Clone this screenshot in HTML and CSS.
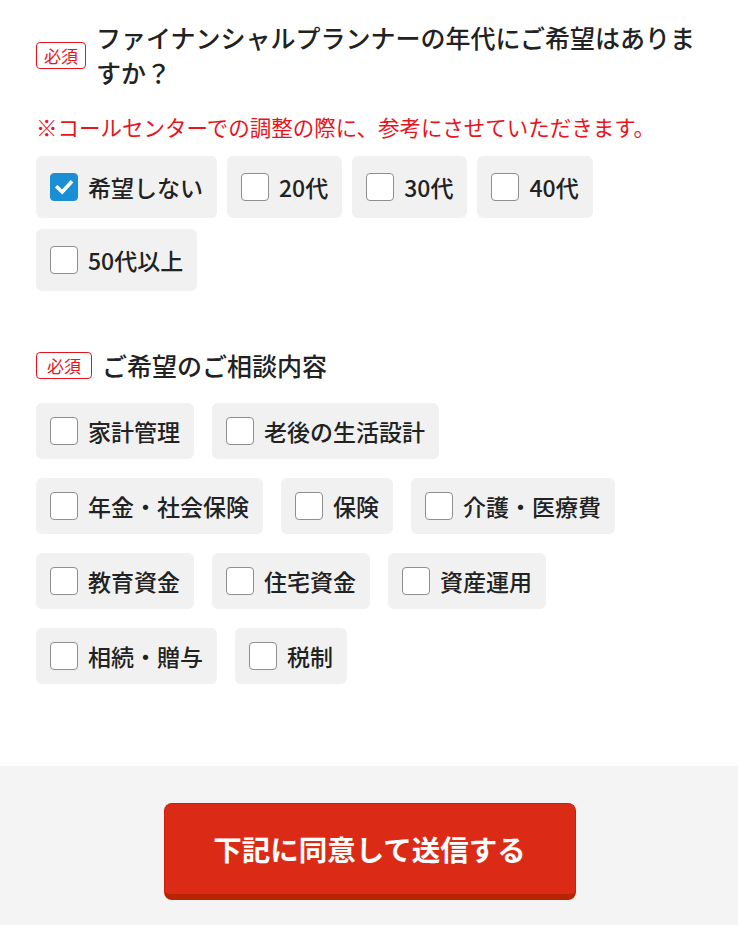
FILE: index.html
```html
<!DOCTYPE html>
<html lang="ja">
<head>
<meta charset="utf-8">
<title>ご希望のご相談内容</title>
<link rel="stylesheet" href="styles.css">
</head>
<body>
<main class="form">
  <section class="field field--age">
    <div class="field-head">
      <span class="badge badge--tight">必須</span>
      <h2 class="field-title">ファイナンシャルプランナーの年代にご希望はありますか？</h2>
    </div>
    <p class="note">※コールセンターでの調整の際に、参考にさせていただきます。</p>
    <div class="options options--wide">
      <label class="option"><span class="check is-checked"><svg viewBox="0 0 28 28" width="28" height="28"><polyline points="7.5,14.5 12.2,19 20.8,9.6" fill="none" stroke="#fff" stroke-width="3.6" stroke-linecap="square"/></svg></span><span class="option-text">希望しない</span></label>
      <label class="option"><span class="check"></span><span class="option-text">20代</span></label>
      <label class="option"><span class="check"></span><span class="option-text">30代</span></label>
      <label class="option"><span class="check"></span><span class="option-text">40代</span></label>
      <label class="option"><span class="check"></span><span class="option-text">50代以上</span></label>
    </div>
  </section>

  <section class="field field--topics">
    <div class="field-head">
      <span class="badge">必須</span>
      <h2 class="field-title field-title--single">ご希望のご相談内容</h2>
    </div>
    <div class="options options--compact">
      <label class="option"><span class="check"></span><span class="option-text">家計管理</span></label>
      <label class="option"><span class="check"></span><span class="option-text">老後の生活設計</span></label>
      <label class="option"><span class="check"></span><span class="option-text">年金・社会保険</span></label>
      <label class="option"><span class="check"></span><span class="option-text">保険</span></label>
      <label class="option"><span class="check"></span><span class="option-text">介護・医療費</span></label>
      <label class="option"><span class="check"></span><span class="option-text">教育資金</span></label>
      <label class="option"><span class="check"></span><span class="option-text">住宅資金</span></label>
      <label class="option"><span class="check"></span><span class="option-text">資産運用</span></label>
      <label class="option"><span class="check"></span><span class="option-text">相続・贈与</span></label>
      <label class="option"><span class="check"></span><span class="option-text">税制</span></label>
    </div>
  </section>
</main>
<footer class="submit-area">
  <button class="submit" type="button">下記に同意して送信する</button>
</footer>
</body>
</html>
```

FILE: styles.css
```css
html, body {
  margin: 0;
  padding: 0;
  background: #fff;
}

body {
  font-family: "Noto Sans CJK JP", "Noto Sans", sans-serif;
  color: #222;
}

.form {
  padding: 20px 36px 0;
}

.field-head {
  display: flex;
  align-items: center;
  gap: 10px;
}

.badge {
  flex: none;
  box-sizing: border-box;
  height: 27px;
  padding: 0 10px;
  border: 1px solid #e8141c;
  border-radius: 4px;
  color: #e8141c;
  font-size: 17px;
  line-height: 25px;
  font-weight: 400;
  white-space: nowrap;
}

.badge--tight {
  padding: 0 7px;
}

.field-title {
  margin: 0;
  font-size: 25px;
  line-height: 35px;
  font-weight: 500;
  color: #222;
}

.note {
  margin: 22px 0 0;
  font-size: 21.5px;
  line-height: 30px;
  color: #e8141c;
}

.options {
  display: flex;
  flex-wrap: wrap;
}

.options--wide {
  margin-top: 14px;
  gap: 11px 10px;
}

.options--wide .option {
  padding: 17px 14px 17px 14px;
}

.field--topics {
  margin-top: 57px;
}

.options--compact {
  max-width: 640px;
  margin-top: 20px;
  gap: 19px 18px;
}

.options--compact .option {
  padding: 14px 14px 14px 14px;
}

.option {
  display: flex;
  align-items: center;
  gap: 10px;
  background: #f1f1f1;
  border-radius: 6px;
}

.check {
  box-sizing: border-box;
  width: 28px;
  height: 28px;
  flex: none;
  background: #fff;
  border: 1px solid #8e8e8e;
  border-radius: 4px;
  display: block;
}

.check svg {
  display: block;
}

.check.is-checked {
  background: #1b8fd6;
  border-color: #1b8fd6;
}

.check.is-checked svg {
  margin: -1px;
}

.option-text {
  font-size: 23px;
  line-height: 28px;
  font-weight: 500;
  color: #222;
  white-space: nowrap;
}

.submit-area {
  margin-top: 82px;
  background: #f4f4f4;
  padding: 37px 0 40px;
  display: flex;
  justify-content: center;
}

.submit {
  box-sizing: border-box;
  width: 412px;
  height: 97px;
  margin-left: 1px;
  background: #db2b17;
  border: 1px solid #c9210e;
  border-bottom: 6px solid #b72500;
  border-radius: 8px;
  color: #fff;
  font-family: "Noto Sans CJK JP", "Noto Sans", sans-serif;
  font-size: 28.5px;
  font-weight: 700;
  padding: 0 0 2px;
  cursor: pointer;
}
```
